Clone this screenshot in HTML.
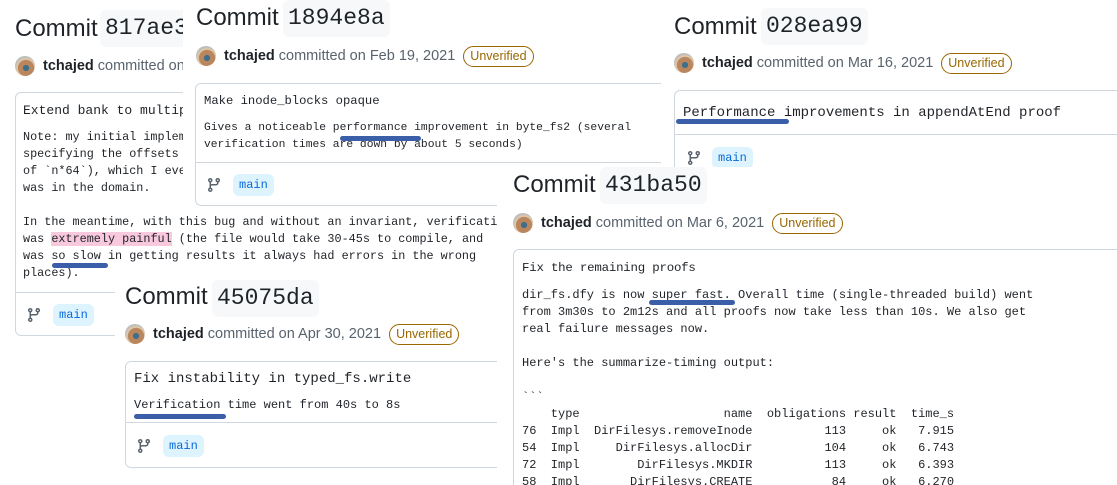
<!DOCTYPE html>
<html><head><meta charset="utf-8"><style>
*{margin:0;padding:0;box-sizing:border-box}
body{width:1117px;height:485px;overflow:hidden;background:#fff;position:relative;font-family:"Liberation Sans",sans-serif;color:#1f2328}
.p{position:absolute;background:#fff;overflow:hidden}
.t{position:absolute;font-size:24px;line-height:32px;white-space:nowrap;color:#1f2328}
.h{position:absolute;background:#f6f8fa;border-radius:6px;font-family:"Liberation Mono",monospace;font-size:23px;height:37px;line-height:37px;padding:0 5px;white-space:nowrap}
.au{position:absolute;height:22px;display:flex;align-items:center;font-size:14.5px;white-space:nowrap;color:#59636e}
.av{width:20px;height:20px;border-radius:50%;background:radial-gradient(circle at 55% 60%,#3d6f8a 0 18%,#b9865e 20% 48%,#e7c9a6 52%,#9fb6c7 80%);margin-right:8px;flex:none}
.au b{color:#1f2328;margin-right:4px}
.bad{border:1px solid #9a6700;color:#9a6700;border-radius:12px;font-size:12.5px;padding:0 6px;height:21px;line-height:19px;margin-left:8px}
.box{position:absolute;border:1px solid #d0d7de;border-radius:6px;background:#fff}
.sep{position:absolute;left:0;right:0;height:1px;background:#d0d7de}
.m{position:absolute;font-family:"Liberation Mono",monospace;white-space:pre;color:#1f2328}
.br{position:absolute;width:16px;height:16px}
.mb{position:absolute;background:#ddf4ff;color:#0969da;font-family:"Liberation Mono",monospace;font-size:12px;height:22px;line-height:22px;padding:0 6px;border-radius:6px}
.ul{position:absolute;height:5px;background:#3b5ea8;border-radius:3px}
.pk{background:#f8c8dc}
</style></head><body>
<svg width="0" height="0" style="position:absolute"><defs><symbol id="gb" viewBox="0 0 16 16"><path fill="#59636e" d="M9.5 3.25a2.25 2.25 0 1 1 3 2.122V6A2.5 2.5 0 0 1 10 8.5H6a1 1 0 0 0-1 1v1.128a2.251 2.251 0 1 1-1.5 0V5.372a2.25 2.25 0 1 1 1.5 0v1.836A2.493 2.493 0 0 1 6 7h4a1 1 0 0 0 1-1v-.628A2.25 2.25 0 0 1 9.5 3.25Zm-6 0a.75.75 0 1 0 1.5 0 .75.75 0 0 0-1.5 0Zm8.25-.75a.75.75 0 1 0 0 1.5.75.75 0 0 0 0-1.5ZM4.25 12a.75.75 0 1 0 0 1.5.75.75 0 0 0 0-1.5Z"/></symbol></defs></svg>

<!-- Panel A -->
<div class="p" style="left:0;top:0;width:500px;height:345px">
  <div class="t" style="left:15px;top:13px">Commit</div>
  <div class="h" style="left:100px;top:10px">817ae3f</div>
  <div class="au" style="left:15px;top:55px"><span class="av"></span><b>tchajed</b>committed on Feb 2, 2021<span class="bad">Unverified</span></div>
  <div class="box" style="left:15px;top:92px;width:700px;height:244px">
    <div class="m" style="left:7px;top:9px;font-size:13px;line-height:18px">Extend bank to multiple disks</div>
    <div class="m" style="left:7px;top:36px;font-size:11.8px;line-height:17px">Note: my initial implementation had a bug in
specifying the offsets (it used `n` instead
of `n*64`), which I eventually tracked down
was in the domain.

In the meantime, with this bug and without an invariant, verification
was <span class="pk">extremely painful</span> (the file would take 30-45s to compile, and
was so slow in getting results it always had errors in the wrong
places).</div>
    <div class="sep" style="top:199px"></div>
    <svg class="br" style="left:10px;top:214px"><use href="#gb"/></svg>
    <div class="mb" style="left:37px;top:211px">main</div>
  </div>
  <div class="ul" style="left:52px;top:263px;width:56px"></div>
</div>

<!-- Panel B -->
<div class="p" style="left:183px;top:0;width:478px;height:210px">
  <div class="t" style="left:13px;top:2px">Commit</div>
  <div class="h" style="left:100px;top:0">1894e8a</div>
  <div class="au" style="left:13px;top:45px"><span class="av"></span><b>tchajed</b>committed on Feb 19, 2021<span class="bad">Unverified</span></div>
  <div class="box" style="left:12px;top:83px;width:500px;height:123px">
    <div class="m" style="left:8px;top:8px;font-size:12.2px;line-height:18px">Make inode_blocks opaque</div>
    <div class="m" style="left:8px;top:36px;font-size:11.3px;line-height:17px">Gives a noticeable performance improvement in byte_fs2 (several
verification times are down by about 5 seconds)</div>
    <div class="sep" style="top:78px"></div>
    <svg class="br" style="left:10px;top:93px"><use href="#gb"/></svg>
    <div class="mb" style="left:37px;top:90px">main</div>
  </div>
  <div class="ul" style="left:157px;top:136px;width:81px"></div>
</div>

<!-- Panel C -->
<div class="p" style="left:661px;top:0;width:456px;height:172px">
  <div class="t" style="left:13px;top:11px">Commit</div>
  <div class="h" style="left:100px;top:8px">028ea99</div>
  <div class="au" style="left:13px;top:52px"><span class="av"></span><b>tchajed</b>committed on Mar 16, 2021<span class="bad">Unverified</span></div>
  <div class="box" style="left:13px;top:90px;width:500px;height:120px">
    <div class="m" style="left:8px;top:12px;font-size:14px;line-height:20px">Performance improvements in appendAtEnd proof</div>
    <div class="sep" style="top:43px"></div>
    <svg class="br" style="left:11px;top:59px"><use href="#gb"/></svg>
    <div class="mb" style="left:37px;top:56px">main</div>
  </div>
  <div class="ul" style="left:15px;top:119px;width:113px"></div>
</div>

<!-- Panel D -->
<div class="p" style="left:115px;top:280px;width:382px;height:205px">
  <div class="t" style="left:10px;top:1px">Commit</div>
  <div class="h" style="left:97px;top:0">45075da</div>
  <div class="au" style="left:10px;top:43px"><span class="av"></span><b>tchajed</b>committed on Apr 30, 2021<span class="bad">Unverified</span></div>
  <div class="box" style="left:10px;top:81px;width:400px;height:107px">
    <div class="m" style="left:8px;top:7px;font-size:14px;line-height:20px">Fix instability in typed_fs.write</div>
    <div class="m" style="left:8px;top:35px;font-size:12px;line-height:17px">Verification time went from 40s to 8s</div>
    <div class="sep" style="top:60px"></div>
    <svg class="br" style="left:10px;top:76px"><use href="#gb"/></svg>
    <div class="mb" style="left:37px;top:73px">main</div>
  </div>
  <div class="ul" style="left:19px;top:134px;width:92px"></div>
</div>

<!-- Panel E -->
<div class="p" style="left:497px;top:167px;width:620px;height:318px">
  <div class="t" style="left:16px;top:2px">Commit</div>
  <div class="h" style="left:103px;top:0">431ba50</div>
  <div class="au" style="left:16px;top:45px"><span class="av"></span><b>tchajed</b>committed on Mar 6, 2021<span class="bad">Unverified</span></div>
  <div class="box" style="left:16px;top:82px;width:700px;height:300px">
    <div class="m" style="left:8px;top:9px;font-size:12.4px;line-height:18px;letter-spacing:-0.2px">Fix the remaining proofs</div>
    <div class="m" style="left:8px;top:37px;font-size:12px;line-height:17px">dir_fs.dfy is now super fast. Overall time (single-threaded build) went
from 3m30s to 2m12s and all proofs now take less than 10s. We also get
real failure messages now.

Here's the summarize-timing output:

&#96;&#96;&#96;
    type                    name  obligations result  time_s
76  Impl  DirFilesys.removeInode          113     ok   7.915
54  Impl     DirFilesys.allocDir          104     ok   6.743
72  Impl        DirFilesys.MKDIR          113     ok   6.393
58  Impl       DirFilesys.CREATE           84     ok   6.270</div>
  </div>
  <div class="ul" style="left:152px;top:133px;width:86px"></div>
</div>
</body></html>
